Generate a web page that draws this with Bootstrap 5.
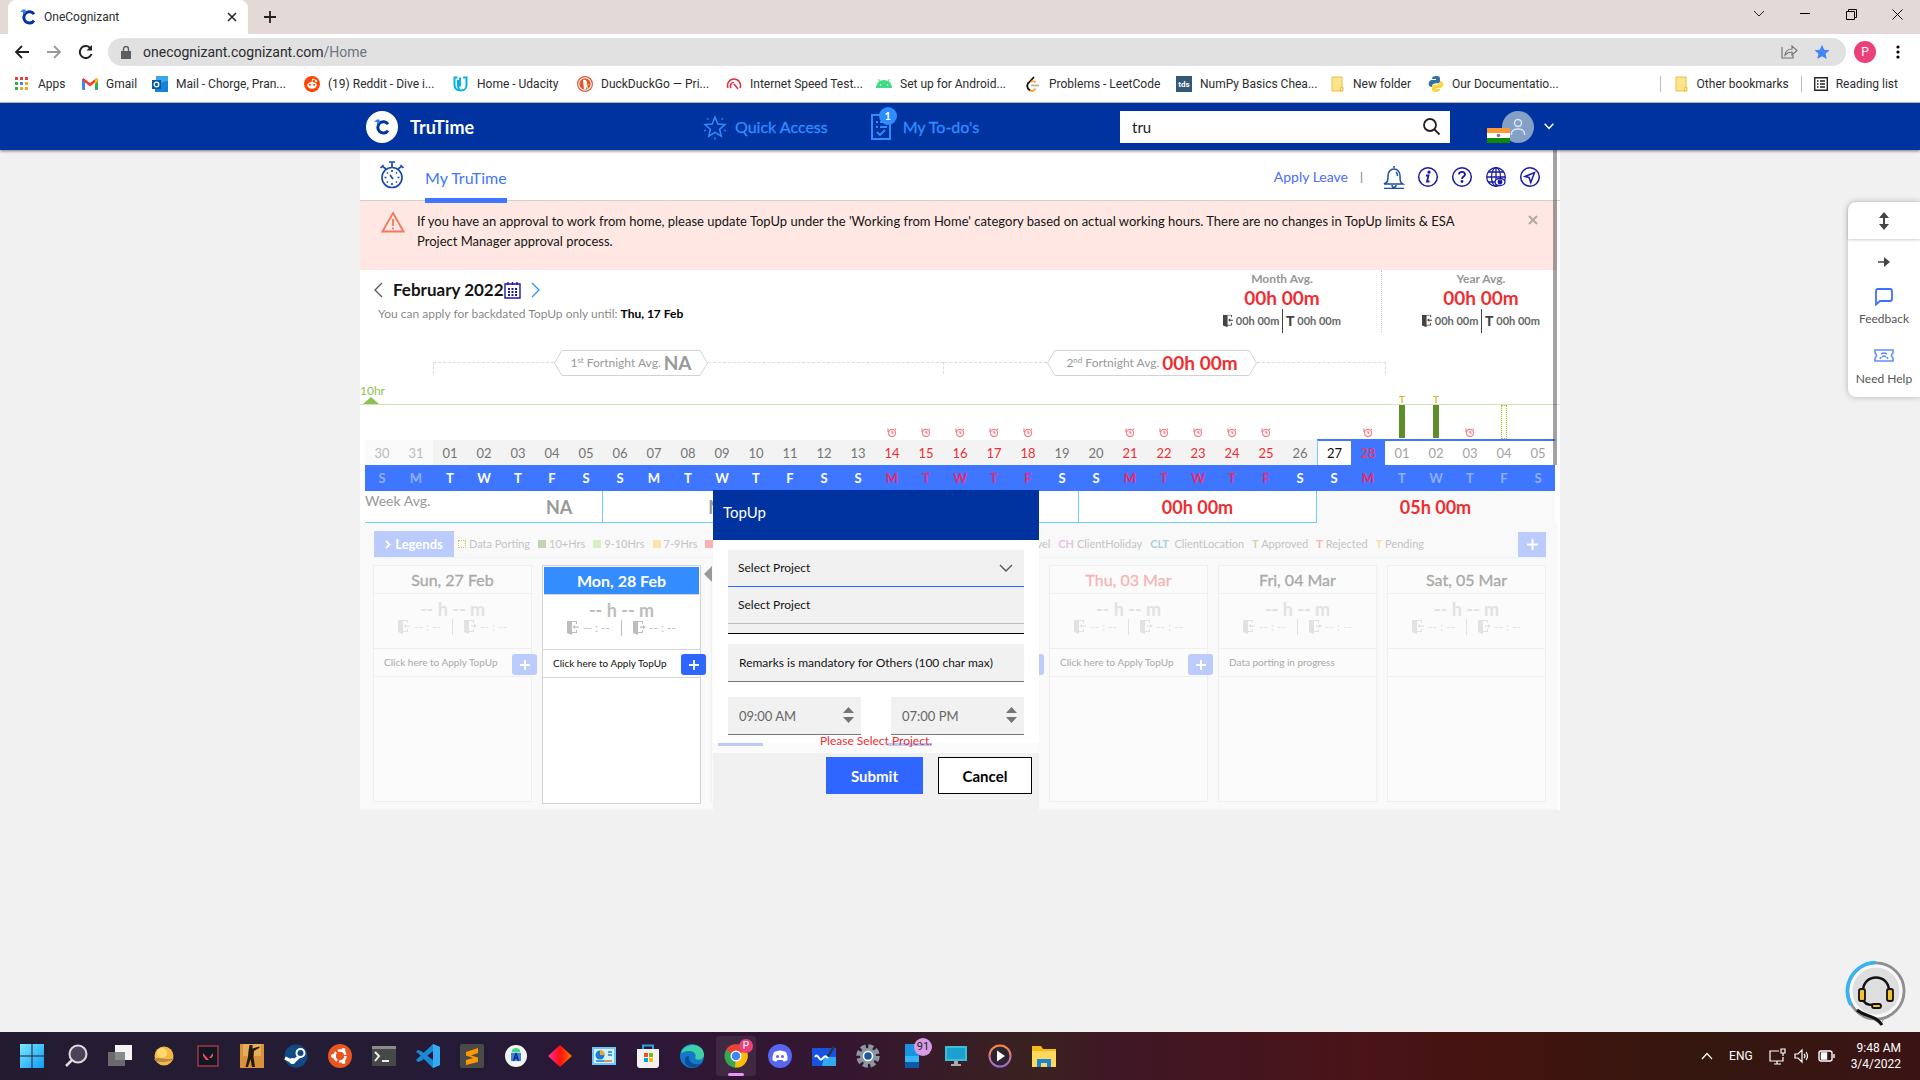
<!DOCTYPE html>
<html lang="en">
<head>
<meta charset="utf-8">
<meta name="viewport" content="width=device-width, initial-scale=1">
<title>OneCognizant</title>
<link href="https://cdn.jsdelivr.net/npm/bootstrap@5.3.0/dist/css/bootstrap.min.css" rel="stylesheet">
<script src="https://cdn.jsdelivr.net/npm/bootstrap@5.3.0/dist/js/bootstrap.bundle.min.js"></script>
<style>
:root{--navy:#0033a0;--blue:#3f76ff;--red:#ee2e32;--grey:#f1f1f1}
body{font-family:Lato,"Liberation Sans",sans-serif;font-size:12px;line-height:16px;color:#141414;background:var(--grey);min-height:100vh;overflow:hidden}
a{text-decoration:none;color:inherit}
svg{display:block;flex:none}
.plain-btn{border:0;background:none;padding:0;color:inherit}
/* browser chrome */
.chrome{font-family:Roboto,"Liberation Sans",sans-serif;color:#2b2c2e}
.tabstrip{height:34px;background:#e3dad7}
.browser-tab{width:240px;height:34px;margin-left:8px;padding:0 10px 0 12px;background:#fff;border-radius:8px 8px 0 0}
.win-ctl{width:46px;height:28px;display:flex;align-items:center;justify-content:center}
.toolbar-row{height:36px;background:#fff;padding:0 16px 0 14px}
.omnibox{height:28px;border-radius:14px;background:#e1e1e1;padding:0 16px 0 13px;margin-left:14px;font-size:14px}
.profile{width:22px;height:22px;line-height:22px;background:#ec407a;color:#fff;border-radius:50%;margin:0 16px 0 4px}
.bookmarks{height:33px;background:#fff;border-bottom:1px solid #c4c4c6;padding:0 22px 4px 14px}
.bookmark-grid{display:grid;grid-template-columns:68px 70px 152px 149px 124px 149px 150px 149px 151px 153px 99px auto}
.bookmark-grid a,.bookmark-right a{display:flex;align-items:center;gap:8px;white-space:nowrap}
.vbar{width:1px;height:16px;background:#bdbdbd}
/* app header */
.app-header{height:47px;background:var(--navy);position:relative;z-index:2;box-shadow:0 1px 3px rgba(0,0,0,.5)}
.shell{max-width:1200px;width:100%;margin-left:auto;margin-right:auto}
.brand{margin-left:6px}
.brand-name{font-size:18px;line-height:24px;font-weight:700;color:#fff}
.head-link{font-size:16px;line-height:24px;color:#2f8dff;-webkit-text-stroke:0.3px #2f8dff}
.todo-count{position:absolute;left:8px;top:-7px;width:18px;height:18px;border-radius:50%;background:#2f8dff;color:#fff;font-size:11px;line-height:18px;font-weight:700;text-align:center;-webkit-text-stroke:0}
.search-box{width:330px;height:32px;background:#fff;padding:0 9px 0 12px}
.search-box input{border:0;outline:0;flex:1;min-width:0;font-size:15px;padding:0;color:#222}
.flag{position:absolute;left:0;bottom:0}
/* panel */
.panel{position:relative;background:#fff}
.panel-scroll{position:absolute;right:3px;top:0;width:4px;height:315px;background:rgba(70,70,70,.5);z-index:1}
.tabs-row{height:51px;border-bottom:1px solid #cfcfcf;padding:0 19px 0 19px}
.main-tab{font-size:16px;line-height:24px;color:var(--blue);height:53px;padding-top:16px;border-bottom:5px solid var(--blue);position:relative;z-index:1;align-self:flex-start}
.apply-link{font-size:14px;line-height:20px;color:#4a6cff}
.notice{background:#ffe8e3;height:69px;margin-right:3px;padding:10px 19px 0 21px;font-size:13px;line-height:20px}
.month-row{height:86px;padding:0 20px 0 14px}
.month-name{font-size:17px;line-height:24px;font-weight:700}
.avg-box{width:118px;text-align:center;color:#969696;font-weight:700;padding-top:1px}
.avg-value{font-size:19px;line-height:22px;color:var(--red);font-weight:700}
.avg-split{font-size:11px;line-height:14px;color:#666}
.avg-split b{font-size:14px;color:#444}
.avg-sep{width:1px;height:62px;border-left:1px dotted #c9c9c9}
.split-bar{width:1px;height:24px;background:#444}
.fortnight{height:26px;margin:-6px 174px 0 73px}
.dash{height:12px;border-top:1px dashed #dcdcdc;margin-top:12px}
.fort-badge{position:relative;height:26px;color:#999;font-size:12px;display:flex;align-items:center;justify-content:center;align-self:flex-start;white-space:nowrap}
.fort-badge svg{position:absolute;inset:0;width:100%;height:100%}
.fort-badge sup{font-size:8px}
.fort-badge b{font-size:19px;line-height:22px;margin-left:3px;position:relative}
.goal{height:29px;border-bottom:1px solid #cde5b4;padding-top:9px;color:#8cc152;font-size:12px;line-height:12px}
.triangle{width:0;border:8px solid transparent;border-top:0;border-bottom:7px solid #8cc152;margin-left:3px}
.cal{width:1190px;table-layout:fixed;border-collapse:separate;border-spacing:0;margin-left:5px;text-align:center}
.cal td,.cal th{padding:0;font-weight:400}
.cal .marks td{height:34px;vertical-align:bottom;position:relative}
.cal .marks svg{margin:0 auto 1px}
.hours-bar{width:6px;height:34px;background:#5c8f2b;border-bottom:1px solid #fff;margin:0 auto}
.porting-bar{width:6px;height:34px;border:1px dotted #b5b800;margin:0 auto}
.t-mark{position:absolute;left:0;right:0;top:-11px;font-size:10px;line-height:10px;font-weight:700;color:#e3b62c}
.cal .dates td{height:26px;background:#f3f3f3;color:#757575;font-size:13px;line-height:22px;border-top:1px solid #fff}
.cal .dates .dim{background:#fafafa;color:#bcbcbc}
.cal .dates .now{background:#fff;border-top:2px solid var(--blue);color:#a3a3a3}
.cal .dates .absent{color:var(--red)}
.cal .dates .sel{background:var(--blue);border-top:2px solid var(--blue);color:#ff2d50}
.cal .dates .first-now{border-left:1px solid #6ecff6;color:#111}
.cal .names th{height:26px;background:var(--blue);color:#fff;font-size:13px;font-weight:700}
.cal .names th.dim{color:#8fb0ff}
.cal .names th.absent{color:#f0286a}
.cal .weeks td{height:32px;border-right:1px solid #6ecff6;border-bottom:1px solid #6ecff6;font-size:18px;font-weight:700;color:#999}
.cal .weeks td.zero{color:var(--red)}
.cal .weeks td.last-week{background:#f9f9f9;border-color:#f9f9f9}
.week-label{font-size:14px;font-weight:400;float:left;line-height:16px;margin-top:-6px}
/* lower area */
.lower{background:#f9f9f9;height:287px;padding:8px 12px 0 13px;margin-right:2px}
.legend-row{height:27px;border-bottom:1px solid #ebf5f7;color:#c4c4c4;font-size:11px;white-space:nowrap}
.legend-btn{width:80px;height:26px;background:#bacbfc;color:#fff;font-size:13px;font-weight:700;margin-left:1px}
.sw{width:8px;height:8px;display:inline-block;margin-right:3px}
.add-btn{width:28px;height:25px;background:#bacbfc;color:#fff;display:flex;align-items:center;justify-content:center;margin-left:94px}
.day-grid{display:grid;grid-template-columns:repeat(7,1fr);gap:10px;margin-top:7px}
.day-card{position:relative;height:237px;border:1px solid #efefef;background:#fbfbfb;color:#a9a9a9}
.day-card header{height:28px;border-bottom:1px solid #efefef;font-size:16px;line-height:27px;text-align:center;-webkit-text-stroke:0.3px currentColor}
.day-time{height:55px;border-bottom:1px solid #efefef;padding-top:5px;text-align:center;color:#e2e2e2}
.day-time b{display:block;font-size:18px;line-height:20px}
.day-topup{height:28px;border-bottom:1px solid #efefef;font-size:10px;line-height:26px;padding-left:10px;white-space:nowrap}
.plus-btn{position:absolute;right:-6px;top:88px;width:25px;height:21px;border-radius:3px;background:#bacbfc;display:flex;align-items:center;justify-content:center;z-index:1}
.day-card.chosen{height:239px;background:#fff;border-color:#d4d4d4;color:#111}
.chosen header{margin:1px 1px 0;background:#338dff;color:#fff;font-weight:700;border-color:#d4d4d4;-webkit-text-stroke:0}
.chosen .day-time{color:#bdbdbd;border-color:#d4d4d4}
.chosen .day-topup{border-color:#d4d4d4}
.chosen .plus-btn{background:#2f66ff}
.door-line{gap:3px}
/* top up dialog */
.topup{position:absolute;left:353px;top:340px;width:326px;z-index:3}
.topup-head{height:50px;background:var(--navy);color:#fff;font-size:15px;line-height:20px;padding:12px 10px}
.topup-body{background:#fff;height:203px;padding:10px 15px 0}
.topup-gap{height:10px;background:#fbfbfb;padding:0 5px}
.bar-hint{width:45px;height:3px;background:#bacbfc}
.topup-foot{background:var(--grey);height:57px;padding:4px 7px 0;gap:15px}
.field{border:0;border-bottom:1px solid #767676;border-radius:0;background:#f1f1f1;color:#141414;width:100%;font-size:12px;outline:0}
.field::placeholder{color:#141414;opacity:1}
.proj{height:37px;border-bottom:1px solid #2f66ff;padding:0 10px;appearance:none;background:#f1f1f1 url("data:image/svg+xml,%3Csvg xmlns='http://www.w3.org/2000/svg' width='14' height='8' fill='none' stroke='%23555' stroke-width='1.4'%3E%3Cpath d='M1 1l6 6 6-6'/%3E%3C/svg%3E") no-repeat right 11px center}
.option-row{height:37px;line-height:36px;background:#f1f1f1;border-bottom:1px solid #bdbdbd;padding:0 10px}
.option-end{height:10px;background:#f1f1f1;border-bottom:1px solid #000}
.remark{height:38px;margin-top:10px;padding:0 11px}
.time-row{margin-top:15px}
.time-wrap{position:relative;width:133px}
.time-field{height:38px;padding:0 11px;color:#666;font-size:13px}
.time-wrap svg{position:absolute;right:7px;top:10px}
.error-msg{position:absolute;left:0;right:0;top:243px;text-align:center;color:var(--red);z-index:1;font-size:12px}
.act{height:37px;border-radius:0;font-size:15px;line-height:20px;font-weight:700}
.submit{width:97px;background:#2f66ff;color:#fff;border:0}
.cancel{width:94px;background:#fff;border:1px solid #000;color:#000}
.topup-arrow{position:absolute;left:-9px;top:76px;width:0;border:8px solid transparent;border-right:8px solid #999;border-left:0}
/* floating tools */
.side-tools{position:absolute;right:0;top:202px;width:72px;background:#fff;border-radius:8px 0 0 8px;box-shadow:0 0 6px rgba(0,0,0,.25);font-size:12px;line-height:16px;color:#555;text-align:center;z-index:4;padding-bottom:10px}
.side-grip{height:37px;box-shadow:0 1px 3px rgba(0,0,0,.2);border-radius:8px 0 0 0}
.side-tools a{display:block;margin-top:21px}
.side-tools a + a{margin-top:22px}
.side-tools span{display:block;margin-top:5px}
.side-tools a + a span{margin-top:9px}
.side-arrow{padding-top:18px}
.chat-help{position:absolute;right:14px;bottom:53px}
/* taskbar */
.taskbar{position:absolute;left:0;right:0;bottom:0;height:48px;padding:0 19px 0 10px;color:#fff;font-family:Roboto,"Liberation Sans",sans-serif;background:linear-gradient(90deg,#231c31 0,#251b36 24%,#2c1737 33%,#35162f 44%,#3a2220 54%,#3f1726 58%,#4a1418 71%,#43130f 78%,#35170f 88%,#3a1414 100%)}
.slot{width:44px;height:48px;display:flex;align-items:center;justify-content:center;position:relative}
.active-app{height:40px;background:rgba(255,255,255,.08);border-radius:4px;width:40px;margin:0 2px}
.active-app::after{content:"";position:absolute;bottom:0;left:12px;width:16px;height:3px;border-radius:2px;background:#e59af0}
.pip{position:absolute;border-radius:50%;text-align:center}
.pip-p{right:3px;top:3px;width:14px;height:14px;background:#ec407a;font-size:10px;line-height:14px}
.pip-n{right:2px;top:6px;width:18px;height:18px;background:#d99be6;color:#222;font-size:11px;line-height:18px}
</style>
</head>
<body>
<svg width="0" height="0" class="position-absolute" aria-hidden="true">
  <symbol id="clogo" viewBox="0 0 16 16"><path d="M14 5.2A5.6 5.6 0 1 0 14 11.6" fill="none" stroke="#0033a0" stroke-width="3"/><path d="M0 2.4 3 .6h2.6V4L3 5.4V3z" fill="#2f7bff"/></symbol>
  <symbol id="door-in" viewBox="0 0 13 14"><path d="M0 0h5l0 14-5-2zM5 0h5v3H9V1H5zM5 11h4V9h1v3H5z" fill="currentColor"/><path d="M12 5.5H8V4L5.500 6 8 8V6.700h4z" fill="currentColor"/></symbol>
  <symbol id="door-out" viewBox="0 0 13 14"><path d="M0 0h5v14l-5-2zM5 0h5v3H9V1H5zM5 11h4V9h1v3H5z" fill="currentColor"/><path d="M7 5.500h3V4l3 2-3 2V6.700H7z" fill="currentColor"/></symbol>
  <symbol id="plus" viewBox="0 0 12 12"><path d="M6 1v10M1 6h10" stroke="#fff" stroke-width="1.800" fill="none"/></symbol>
  <symbol id="alarm" viewBox="0 0 10 11"><circle cx="5" cy="6" r="3.600" fill="#fff0f0" stroke="#f0868b" stroke-width="1.200"/><path d="M1 5V1.500M9 3l-1-1.500M5 4v2h1.500" stroke="#d8707d" fill="none"/></symbol>
  <symbol id="folder" viewBox="0 0 16 16"><path d="M3 1h10v14H3z" fill="#ffe48d" stroke="#e9bf45"/><path d="M11.500 11.500h2.500v3.500h-2.500z" fill="#ffe48d" stroke="#e9bf45"/></symbol>
</svg>

<div class="chrome">
  <div class="tabstrip d-flex align-items-end">
    <div class="browser-tab d-flex align-items-center">
      <svg width="16" height="16"><use href="#clogo"/></svg><span class="ms-2 flex-grow-1">OneCognizant</span>
      <button class="plain-btn" aria-label="Close tab"><svg width="12" height="12" viewBox="0 0 12 12" stroke="#222" stroke-width="1.500"><path d="M2 2l8 8M10 2l-8 8"/></svg></button>
    </div>
    <button class="plain-btn ms-3 mb-2" aria-label="New tab"><svg width="13" height="18" viewBox="0 0 13 18" stroke="#222" stroke-width="1.800"><path d="M6 3v12M0 9h12"/></svg></button>
    <div class="d-flex ms-auto align-self-start">
      <button class="plain-btn win-ctl" aria-label="Tab search"><svg width="12" height="8" viewBox="0 0 12 8" fill="none" stroke="#222"><path d="M1 1l5 5 5-5"/></svg></button>
      <button class="plain-btn win-ctl" aria-label="Minimize"><svg width="10" height="2"><rect width="10" height="1"/></svg></button>
      <button class="plain-btn win-ctl" aria-label="Restore"><svg width="11" height="11" viewBox="0 0 11 11" fill="none" stroke="#000"><path d="M.5 2.500h8v8h-8zM2.500 2.500v-2h8v8h-2"/></svg></button>
      <button class="plain-btn win-ctl" aria-label="Close"><svg width="11" height="11" viewBox="0 0 11 11" stroke="#000"><path d="M.5.5l10 10M10.500.5l-10 10"/></svg></button>
    </div>
  </div>
  <div class="toolbar-row d-flex align-items-center">
    <button class="plain-btn" aria-label="Back"><svg width="16" height="16" viewBox="0 0 16 16" fill="none" stroke="#222" stroke-width="1.800"><path d="M15 8H2M8 2L2 8l6 6"/></svg></button>
    <button class="plain-btn ms-3" aria-label="Forward"><svg width="16" height="16" viewBox="0 0 16 16" fill="none" stroke="#9a9a9a" stroke-width="1.800"><path d="M1 8h13M8 2l6 6-6 6"/></svg></button>
    <button class="plain-btn ms-3" aria-label="Reload"><svg width="16" height="16" viewBox="0 0 16 16" fill="none" stroke="#222" stroke-width="2"><path d="M13.500 10A6 6 0 1 1 12 3.700"/><path d="M14 1v5.500H8.500z" fill="#222" stroke="none"/></svg></button>
    <div class="omnibox d-flex align-items-center flex-grow-1">
      <svg width="10" height="13" viewBox="0 0 10 13"><path d="M0 5h10v8H0z" fill="#5c5e62"/><path d="M2.500 5V3a2.500 2.500 0 0 1 5 0v2" fill="none" stroke="#5c5e62" stroke-width="1.400"/></svg>
      <a href="#" class="ms-2 ps-1">onecognizant.cognizant.com<span class="text-secondary">/Home</span></a>
      <svg class="ms-auto" width="17" height="16" viewBox="0 0 17 16" fill="none" stroke="#777" stroke-width="1.200"><path d="M1 3v11h11v-3"/><path d="M4 11c.5-4 3-6 7-6V2l5 4.500-5 4.500V8c-3 0-5 1-7 3z"/></svg>
      <svg class="ms-3" width="16" height="16" viewBox="0 0 16 16"><path d="M8 .8l2.200 4.900 5.300.5-4 3.500 1.200 5.200L8 12.200 3.300 14.900l1.200-5.200-4-3.500 5.300-.5z" fill="#4285f4"/></svg>
    </div>
    <button class="plain-btn profile ms-2">P</button>
    <button class="plain-btn px-1" aria-label="Menu"><svg width="4" height="14"><circle cx="2" cy="2" r="1.600"/><circle cx="2" cy="7" r="1.600"/><circle cx="2" cy="12" r="1.600"/></svg></button>
  </div>
  <div class="bookmarks d-flex align-items-center justify-content-between">
    <nav class="bookmark-grid">
      <a href="#"><svg width="16" height="16" viewBox="0 0 16 16"><g fill="#ea4335"><path d="M1 1h3v3H1zM6 1h3v3H6zM11 1h3v3h-3z"/></g><path d="M1 6h3v3H1z" fill="#34a853"/><path d="M6 6h3v3H6z" fill="#4285f4"/><path d="M11 6h3v3h-3zM6 11h3v3H6zM11 11h3v3h-3z" fill="#f5a623"/><path d="M1 11h3v3H1z" fill="#34a853"/></svg>Apps</a>
      <a href="#"><svg width="16" height="16" viewBox="0 0 16 16"><path d="M0 3h3v11H1.200Q0 14 0 13z" fill="#4285f4"/><path d="M13 3h3v10q0 1-1.200 1H13z" fill="#34a853"/><path d="M0 4l1.500-2L8 7l6.500-5L16 4l-8 6.500z" fill="#ea4335"/><path d="M13 3l2-1 1 1.500v2L13 8z" fill="#fbbc04"/></svg>Gmail</a>
      <a href="#"><svg width="16" height="16" viewBox="0 0 16 16"><path d="M4 0h12v7H4z" fill="#35a9ea"/><path d="M3 8l13-3v11H3z" fill="#1783d8"/><path d="M0 4h9v9H0z" fill="#0a58a8"/><circle cx="4.500" cy="8.500" r="2.300" fill="none" stroke="#fff" stroke-width="1.300"/></svg>Mail - Chorge, Pran...</a>
      <a href="#"><svg width="16" height="16" viewBox="0 0 16 16"><circle cx="8" cy="8" r="8" fill="#ff4500"/><ellipse cx="8" cy="9.300" rx="4.800" ry="3.400" fill="#fff"/><circle cx="12" cy="5" r="1.200" fill="#fff"/><circle cx="6" cy="8.700" r="1" fill="#ff4500"/><circle cx="10" cy="8.700" r="1" fill="#ff4500"/><path d="M8 6l.7-3 3 1M6 11q2 1.200 4 0" stroke="#fff" fill="none"/></svg>(19) Reddit - Dive i...</a>
      <a href="#"><svg width="16" height="16" viewBox="0 0 16 16" fill="none" stroke="#02b3e4" stroke-width="2"><path d="M4.500 1.500H1.500V9c0 4 3 5.500 5.500 5M7 1.500v9"/><path d="M10 1.500h3.500V9c0 3-2 5.500-5 5.500S5 12 5 9V4"/></svg>Home - Udacity</a>
      <a href="#"><svg width="16" height="16" viewBox="0 0 16 16"><circle cx="8" cy="8" r="7.400" fill="#fff" stroke="#de5833" stroke-width="1.200"/><circle cx="8" cy="8" r="5.700" fill="#de5833"/><path d="M6 4c3-1 4 1 4 4l1 5c-2 1-4 0-4 0z" fill="#fff"/><path d="M9 8h4l-3 1.500z" fill="#fbbc04"/><path d="M9 11l2 2-2 .5z" fill="#34a853"/></svg>DuckDuckGo — Pri...</a>
      <a href="#"><svg width="16" height="16" viewBox="0 0 16 16" fill="none" stroke="#dc3545" stroke-width="1.600"><path d="M2 12A6.500 6.500 0 1 1 14 12M5 12a3.500 3.500 0 0 1 3-5.500M8 8l4 5" /></svg>Internet Speed Test...</a>
      <a href="#"><svg width="16" height="16" viewBox="0 0 16 16"><path d="M0 12a8 8 0 0 1 16 0z" fill="#3ddc84"/><path d="M4 6L2.500 3M12 6l1.500-3" stroke="#3ddc84"/><circle cx="4.500" cy="9" r=".8" fill="#fff"/><circle cx="11.500" cy="9" r=".8" fill="#fff"/></svg>Set up for Android...</a>
      <a href="#"><svg width="16" height="16" viewBox="0 0 16 16" fill="none" stroke-width="1.800"><path d="M9 1L3.500 7" stroke="#111"/><path d="M3.500 6.500C1 10 3 13 5 14.500" stroke="#111"/><path d="M5 14.500c2 1.500 4 0 5.500-2M6 6c2-2 3-1 4.500.5" stroke="#ffa116"/><path d="M6 9.500h8" stroke="#b3b3b3"/></svg>Problems - LeetCode</a>
      <a href="#"><svg width="16" height="16" viewBox="0 0 16 16"><path d="M0 0h16v16H0z" fill="#355876"/><text x="8" y="11" font-size="8" font-weight="700" fill="#fff" text-anchor="middle">tds</text></svg>NumPy Basics Chea...</a>
      <a href="#"><svg width="16" height="16"><use href="#folder"/></svg>New folder</a>
      <a href="#"><svg width="16" height="16" viewBox="0 0 16 16"><path d="M8 0c4 0 4 1 4 4.500C12 8 10 7 7 7.500 4 8 4 10 4 11c-5 0-4-7 0-7h4V3H4c0-2 1-3 4-3z" fill="#3571a3"/><path d="M8 16c-4 0-4-1-4-4.500C4 8 6 9 9 8.500c3-.5 3-2.500 3-3.500 5 0 4 7 0 7H8v1h4c0 2-1 3-4 3z" fill="#ffd53e"/></svg>Our Documentatio...</a>
    </nav>
    <div class="bookmark-right d-flex align-items-center">
      <span class="vbar me-2"></span><a href="#" class="ms-1 me-2"><svg width="16" height="16"><use href="#folder"/></svg>Other bookmarks</a>
      <span class="vbar me-2 ms-1"></span><a href="#" class="ps-1"><svg width="14" height="14" viewBox="0 0 14 14" fill="none" stroke="#222" stroke-width="1.400"><path d="M.7.7h12.600v12.600H.7zM3 4h1.500M6 4h5M3 7h1.500M6 7h5M3 10h1.500M6 10h5"/></svg>Reading list</a>
    </div>
  </div>
</div>

<header class="app-header">
  <div class="shell d-flex align-items-center h-100 position-relative">
    <a href="#" class="brand d-flex align-items-center"><svg width="32" height="32" viewBox="0 0 32 32"><circle cx="16" cy="16" r="16" fill="#fff"/><use href="#clogo" x="8" y="8" width="16" height="16"/></svg><span class="brand-name ms-2 ps-1">TruTime</span></a>
    <div class="position-absolute start-0 end-0 d-flex align-items-center" style="padding-left:343px">
      <a href="#" class="head-link d-flex align-items-center"><svg width="24" height="26" viewBox="0 0 24 26" fill="none" stroke="#2f8dff" stroke-width="1.500"><path d="M12 3l2.800 7 7.200.6-5.400 4.600 1.600 7L12 18.400l-6.200 3.800 1.600-7L2 10.600 9.200 10z"/><path d="M4 4l1.500 2M20 4l-1.500 2M1 17l2-1M23 17l-2-1M12 23v3" stroke-width="1.100"/></svg><span class="ms-1 ps-1">Quick Access</span></a>
      <a href="#" class="head-link d-flex align-items-center position-relative" style="margin-left:43px"><svg width="20" height="26" viewBox="0 0 20 26" fill="none" stroke="#2f8dff" stroke-width="2"><path d="M1 1h18v24H1z"/><path d="M5 8h2M9 8h7M5 13h2M9 13h7M6 18l3 3 5-5" stroke-width="1.800"/></svg><span class="todo-count">1</span><span class="ms-2 ps-1">My To-do's</span></a>
      <label class="search-box d-flex align-items-center ms-auto"><span class="visually-hidden">Search</span><input type="text" value="tru"><svg width="18" height="18" viewBox="0 0 18 18" fill="none" stroke="#222" stroke-width="1.800"><circle cx="7" cy="7" r="6"/><path d="M11.500 11.500l5 5"/></svg></label>
      <div class="position-relative" style="width:47px;height:32px;margin-left:37px"><svg class="ms-auto" width="32" height="32" viewBox="0 0 32 32"><circle cx="16" cy="16" r="16" fill="#85a0c6"/><g fill="none" stroke="#dbe7f5" stroke-width="1.400"><circle cx="16" cy="12" r="3.500"/><path d="M9.500 24v-1.500c0-6 13-6 13 0V24"/></g></svg>
      <svg class="flag" width="23" height="15" viewBox="0 0 23 15"><path d="M0 0h23v5H0z" fill="#ff9933"/><path d="M0 5h23v5H0z" fill="#fff"/><path d="M0 10h23v5H0z" fill="#138808"/><circle cx="11.500" cy="7.500" r="1.800" fill="#7775b8"/></svg></div>
      <button class="plain-btn" style="margin:0 6px 0 10px" aria-label="Account menu"><svg width="10" height="7" viewBox="0 0 10 7" fill="none" stroke="#fff" stroke-width="1.500"><path d="M.7.8L5 5.500 9.300.8"/></svg></button>
    </div>
  </div>
</header>

<main class="shell panel">
  <div class="panel-scroll"></div>
  <div class="tabs-row d-flex align-items-center">
    <svg width="26" height="28" viewBox="0 0 26 28" fill="none" stroke="#1d4ea8" stroke-width="1.700"><circle cx="13" cy="16.500" r="10"/><path d="M10 1h6M13 1v5M3 5l4 3M23 5l-4 3M1.500 7l3-3M24.500 7l-3-3"/><path d="M13 9v2M13 22v2M5.500 16.500h2M18.500 16.500h2M8 11.500l1 1M18 11.500l-1 1M8 21.500l1-1M18 21.500l-1-1M11 14l3 4"/></svg>
    <a href="#" class="main-tab" style="margin-left:20px">My TruTime</a>
    <a href="#" class="apply-link ms-auto mt-1">Apply Leave</a><span class="ms-2 ps-1 mt-1 text-secondary">|</span>
    <div class="d-flex align-items-center gap-2 ms-3 ps-1 mt-1">
      <a href="#" aria-label="Alerts" class="me-1"><svg width="22" height="24" viewBox="0 0 22 24" fill="none" stroke="#1d4ea8" stroke-width="1.500"><path d="M11 1v2M1 19h19c-3-2-3-3-3-8 0-4-2.500-7-6-7s-6 3-6 7c0 5 0 6-4 8zM9 20c0 3 4 3 4 0M13 7c1 1 1.500 2 1.500 4M1 23.500h20"/></svg></a>
      <a href="#" aria-label="Information" class="me-1"><svg width="22" height="22" viewBox="0 0 22 22" fill="none" stroke="#1a1aa6" stroke-width="1.500"><circle cx="11" cy="11" r="9.300"/><path d="M9 9.500h2.500L10 15.500h2.500" stroke-width="1.800"/><circle cx="12" cy="6.200" r=".9" fill="#1a1aa6"/></svg></a>
      <a href="#" aria-label="Help" class="me-1"><svg width="22" height="22" viewBox="0 0 22 22" fill="none" stroke="#1a1aa6" stroke-width="1.500"><circle cx="11" cy="11" r="9.300"/><path d="M8 8.500C8 5 14 5 14 8.500c0 2-3 2.200-3 4.500" stroke-width="1.800"/><circle cx="11" cy="15.500" r=".7" fill="#1a1aa6"/></svg></a>
      <a href="#" aria-label="Language" class="me-1"><svg width="22" height="22" viewBox="0 0 22 22" fill="none" stroke="#1a1aa6" stroke-width="1.300"><circle cx="11" cy="11" r="9.300"/><ellipse cx="11" cy="11" rx="4.500" ry="9.300"/><path d="M11 2v18M2 11h18M3.500 6h15M3.500 16h15"/><ellipse cx="15" cy="16" rx="5" ry="3.500" fill="#fff"/><circle cx="15" cy="16" r="1.800" fill="#1a1aa6"/></svg></a>
      <a href="#" aria-label="Navigate"><svg width="22" height="22" viewBox="0 0 22 22" fill="none" stroke="#1a1aa6" stroke-width="1.500"><circle cx="11" cy="11" r="9.300"/><path d="M15.500 6.500l-3.700 10-1.800-5-4-1z"/></svg></a>
    </div>
  </div>

  <div class="notice d-flex">
    <svg width="24" height="22" viewBox="0 0 24 22" fill="none" stroke="#f4795b" stroke-width="1.800"><path d="M12 2l10.500 18.500h-21z"/><path d="M12 8v7M12 16.500v2"/></svg>
    <p class="mb-0 ms-2 ps-1 flex-grow-1 pe-5">If you have an approval to work from home, please update TopUp under the 'Working from Home' category based on actual working hours. There are no changes in TopUp limits &amp; ESA Project Manager approval process.</p>
    <button class="plain-btn align-self-start mt-1" aria-label="Dismiss"><svg width="10" height="10" viewBox="0 0 10 10" stroke="#b3a8a6" stroke-width="2.200"><path d="M1 1l8 8M9 1L1 9"/></svg></button>
  </div>

  <section class="month-row d-flex">
    <div class="pt-2">
      <div class="d-flex align-items-center">
        <button class="plain-btn" aria-label="Previous month"><svg width="9" height="16" viewBox="0 0 9 16" fill="none" stroke="#555" stroke-width="1.300"><path d="M8 1L1 8l7 7"/></svg></button>
        <span class="month-name" style="margin-left:10px">February 2022</span>
        <button class="plain-btn" aria-label="Pick date"><svg width="17" height="18" viewBox="0 0 17 18" fill="none" stroke="#1a1aa6" stroke-width="1.400"><path d="M1 3h15v14H1zM4 1v3M8.500 1v3M13 1v3"/><path d="M4 8h9M4 11h9M4 14h9" stroke-dasharray="2 1.500" stroke-width="2"/></svg></button>
        <button class="plain-btn" style="margin-left:10px" aria-label="Next month"><svg width="9" height="16" viewBox="0 0 9 16" fill="none" stroke="#2f8dff" stroke-width="1.300"><path d="M1 1l7 7-7 7"/></svg></button>
      </div>
      <div class="ms-1 mt-1 text-black-50">You can apply for backdated TopUp only until: <b class="text-black">Thu, 17 Feb</b></div>
    </div>
    <div class="avg-box ms-auto">Month Avg.
      <div class="avg-value">00h 00m</div>
      <div class="avg-split d-flex align-items-center justify-content-between"><svg width="10" height="14" viewBox="0 0 11 14" color="#444"><use href="#door-in" width="13" height="14"/></svg>00h 00m<span class="split-bar"></span><b>T</b>00h 00m</div>
    </div>
    <div class="avg-sep" style="margin:0 40px"></div>
    <div class="avg-box">Year Avg.
      <div class="avg-value">00h 00m</div>
      <div class="avg-split d-flex align-items-center justify-content-between"><svg width="10" height="14" viewBox="0 0 11 14" color="#444"><use href="#door-in" width="13" height="14"/></svg>00h 00m<span class="split-bar"></span><b>T</b>00h 00m</div>
    </div>
  </section>

  <section class="fortnight d-flex">
    <div class="dash flex-grow-1" style="border-left:1px dashed #dcdcdc"></div>
    <div class="fort-badge" style="width:154px"><svg viewBox="0 0 154 26" preserveAspectRatio="none" fill="#fff" stroke="#d2d2d2"><path d="M8 .5h138l7.500 12.500-7.500 12.500H8L.5 13z"/></svg><span class="position-relative">1<sup>st</sup> Fortnight Avg.</span><b>NA</b></div>
    <div class="dash" style="width:236px;border-right:1px dashed #dcdcdc"></div>
    <div class="dash" style="width:103px"></div>
    <div class="fort-badge" style="width:210px"><svg viewBox="0 0 210 26" preserveAspectRatio="none" fill="#fff" stroke="#d2d2d2"><path d="M8 .5h194l7.500 12.500-7.500 12.500H8L.5 13z"/></svg><span class="position-relative">2<sup>nd</sup> Fortnight Avg.</span><b style="color:var(--red)">00h 00m</b></div>
    <div class="dash" style="width:129px;border-right:1px dashed #dcdcdc"></div>
  </section>

  <div class="goal">10hr<div class="triangle"></div></div>
  <table class="cal">
    <tbody id="calBody"></tbody>
  </table>

  <section class="lower">
    <div class="legend-row d-flex align-items-center">
      <button class="plain-btn legend-btn d-flex align-items-center justify-content-center"><svg class="me-1" width="6" height="9" viewBox="0 0 6 9" fill="none" stroke="#fff" stroke-width="1.800"><path d="M1 1l3.500 3.500L1 8"/></svg>Legends</button>
      <span class="ms-1"><i class="sw" style="border:1px dotted #c9cc4a"></i>Data Porting</span>
      <span class="ms-2"><i class="sw" style="background:#c3d4b4"></i>10+Hrs</span>
      <span class="ms-2"><i class="sw" style="background:#d9edc3"></i>9-10Hrs</span>
      <span class="ms-2"><i class="sw" style="background:#fbe5ae"></i>7-9Hrs</span>
      <span class="ms-2"><i class="sw" style="background:#f8b0b3"></i></span>
      <span class="ms-auto">Travel</span>
      <span class="ms-2"><b style="color:#e8c3e2">CH</b> ClientHoliday</span>
      <span class="ms-2"><b style="color:#a5d2da">CLT</b>&nbsp; ClientLocation</span>
      <span class="ms-2"><b style="color:#c5dcae">T</b> Approved</span>
      <span class="ms-2"><b style="color:#f8b0b3">T</b> Rejected</span>
      <span class="ms-2"><b style="color:#f4dfaa">T</b> Pending</span>
      <button class="plain-btn add-btn" aria-label="Add"><svg width="13" height="13"><use href="#plus"/></svg></button>
    </div>
    <div class="day-grid" id="dayGrid"></div>
  </section>

  <form class="topup" onsubmit="return false">
    <div class="topup-arrow"></div>
    <div class="topup-head">TopUp</div>
    <div class="topup-body">
      <label class="visually-hidden" for="proj">Project</label>
      <select id="proj" class="field proj d-block"><option>Select Project</option></select>
      <div class="option-row">Select Project</div>
      <div class="option-end"></div>
      <label class="visually-hidden" for="remark">Remarks</label>
      <input id="remark" class="field remark d-block" placeholder="Remarks is mandatory for Others (100 char max)">
      <div class="time-row d-flex justify-content-between">
        <div class="time-wrap"><label class="visually-hidden" for="from">From</label><input id="from" class="field time-field d-block" value="09:00 AM"><svg width="11" height="16" viewBox="0 0 11 16" fill="#757575"><path d="M0 6l5.500-6L11 6zM0 10h11l-5.500 6z"/></svg></div>
        <div class="time-wrap"><label class="visually-hidden" for="to">To</label><input id="to" class="field time-field d-block" value="07:00 PM"><svg width="11" height="16" viewBox="0 0 11 16" fill="#757575"><path d="M0 6l5.500-6L11 6zM0 10h11l-5.500 6z"/></svg></div>
      </div>
    </div>
    <div class="error-msg">Please Select Project.</div>
    <div class="topup-gap d-flex"><div class="bar-hint"></div><div class="bar-hint" style="margin-left:124px"></div></div>
    <div class="topup-foot d-flex justify-content-end">
      <button class="act submit">Submit</button><button class="act cancel">Cancel</button>
    </div>
  </form>
</main>

<aside class="side-tools">
  <div class="side-grip d-flex align-items-center justify-content-center"><svg width="10" height="18" viewBox="0 0 10 18" fill="#444"><path d="M5 0l5 6H6v6h4l-5 6-5-6h4V6H0z"/></svg></div>
  <div class="side-arrow d-flex justify-content-center"><svg width="12" height="10" viewBox="0 0 12 10" fill="#444"><path d="M0 4.200h6V0l6 5-6 5V5.800H0z"/></svg></div>
  <a href="#"><svg class="mx-auto" width="18" height="18" viewBox="0 0 18 18" fill="none" stroke="#3f6fff" stroke-width="1.800"><path d="M1 16.500V3q0-2 2-2h12q2 0 2 2v8q0 2-2 2H5z"/></svg><span>Feedback</span></a>
  <a href="#"><svg class="mx-auto" width="20" height="13" viewBox="0 0 20 13" fill="none" stroke="#5f8cff" stroke-width="1.600"><path d="M1 1h18v3q-3 2.500 0 5v3H1V9q3-2.500 0-5zM7 5q3-2 6 0M8 8q2-2 4 0M6 10l1-2M14 10l-1-2"/></svg><span>Need Help</span></a>
</aside>

<button class="plain-btn chat-help" aria-label="Chat support"><svg width="61" height="66" viewBox="0 0 61 66"><path d="M36 64L22 54h18z" fill="#ddd" stroke="#aaa"/><circle cx="31" cy="30" r="28" fill="#e2e2e2" stroke="#8f8f8f" stroke-width="3"/><path d="M6 44A28.500 28.500 0 0 1 31 1.500" fill="none" stroke="#35b5f5" stroke-width="3.500"/><circle cx="31" cy="30" r="25" fill="#dedede" stroke="#f8f8f8" stroke-width="3"/><path d="M12 49c8 7 19 5 25 15" fill="none" stroke="#111" stroke-width="3"/><g fill="none" stroke="#111" stroke-width="2.500"><path d="M18 30c0-18 26-18 26 0M18 38c1 5 6 6 10 6"/></g><g fill="#f2c230" stroke="#111" stroke-width="1.800"><rect x="14" y="28" width="6" height="12" rx="2"/><rect x="42" y="28" width="6" height="12" rx="2"/><rect x="27" y="43" width="9" height="4" rx="2"/></g></svg></button>

<footer class="taskbar d-flex align-items-center">
  <div class="slot"><svg width="24" height="24" viewBox="0 0 24 24"><defs><linearGradient id="wg" x2="1" y2="1"><stop stop-color="#7ce8ff"/><stop offset="1" stop-color="#0f9bf5"/></linearGradient></defs><path d="M0 0h11.500v11.500H0zM12.500 0H24v11.500H12.500zM0 12.500h11.500V24H0zM12.500 12.500H24V24H12.500z" fill="url(#wg)"/></svg></div>
  <div class="slot"><svg width="24" height="24" viewBox="0 0 24 24"><circle cx="14" cy="10" r="8.500" fill="#4b4458" stroke="#ddd" stroke-width="2"/><path d="M8 16l-6 6" stroke="#ddd" stroke-width="2.500"/></svg></div>
  <div class="slot"><svg width="24" height="24" viewBox="0 0 24 24"><path d="M7 1h17v15H7z" fill="#f4f4f4"/><path d="M0 8h17v14H0z" fill="#777" opacity=".85"/></svg></div>
  <div class="slot"><svg width="22" height="22" viewBox="0 0 22 22"><circle cx="11" cy="11" r="9.500" fill="#f5b942"/><circle cx="9" cy="8" r="5" fill="#ffd96e"/><path d="M1 14c6-3 11 2 20-1-1 4-18 6-20 1z" fill="#b98747"/></svg></div>
  <div class="slot"><svg width="22" height="22" viewBox="0 0 22 22"><path d="M1 1h20v20H1z" fill="#101823" stroke="#a33244" stroke-width="1.500"/><path d="M6 8l6 7H9l-3-4zM16 8v3l-1.500 2h-2.500z" fill="#ff4655"/></svg></div>
  <div class="slot"><svg width="24" height="24" viewBox="0 0 24 24"><path d="M0 0h24v24H0z" fill="#d9923b"/><path d="M3 0h18v12H3z" fill="#f1c06a" opacity=".6"/><path d="M9.500 1h3v3.500l7-2v1.200L14 7l-.5 6L15 23h-3l-1.500-8L8 23H5.500L8 13l.5-6z" fill="#251a12"/></svg></div>
  <div class="slot"><svg width="24" height="24" viewBox="0 0 24 24"><circle cx="12" cy="12" r="11.500" fill="#124a84"/><path d="M1 14l8 4 9-8" stroke="#fff" stroke-width="3.500" fill="none"/><circle cx="16.500" cy="9" r="4" fill="#124a84" stroke="#fff" stroke-width="2"/><circle cx="8.500" cy="17" r="3" fill="#fff"/></svg></div>
  <div class="slot"><svg width="24" height="24" viewBox="0 0 24 24"><circle cx="12" cy="12" r="12" fill="#e95420"/><circle cx="12" cy="12" r="5.500" fill="none" stroke="#fff" stroke-width="2.500" stroke-dasharray="9.500 2"/><circle cx="5" cy="12" r="2" fill="#fff"/><circle cx="15.500" cy="6" r="2" fill="#fff"/><circle cx="15.500" cy="18" r="2" fill="#fff"/></svg></div>
  <div class="slot"><svg width="24" height="20" viewBox="0 0 24 20"><rect width="24" height="20" rx="1" fill="#484848"/><path d="M0 0h24v3H0z" fill="#8a8a8a"/><path d="M3 6l4 4-4 5M10 15h7" stroke="#eee" stroke-width="2" fill="none"/></svg></div>
  <div class="slot"><svg width="24" height="24" viewBox="0 0 24 24"><path d="M17 0l7 3v18l-7 3L2 9l-2-1 2-2 3 1 12 9V7L5 17l-3 1-2-2z" fill="#1b8ad6"/><path d="M17 0l7 3v18l-7 3z" fill="#35a9f1"/></svg></div>
  <div class="slot"><svg width="24" height="24" viewBox="0 0 24 24"><rect width="24" height="24" rx="2" fill="#4a4a4a"/><path d="M18 4v5l-7 2.500 7 2V18L6 21v-5l7-2-7-2.500V8z" fill="#ff9800"/></svg></div>
  <div class="slot"><svg width="22" height="22" viewBox="0 0 22 22"><circle cx="11" cy="11" r="11" fill="#f4f4f4"/><path d="M6 8h10v8H6z" fill="#3b82f0"/><path d="M6.500 7.500a4.500 4.500 0 0 1 9 0z" fill="#3ddc84"/><path d="M11 8l-2.500 8M11 8l2.500 8M9 13h4" stroke="#0b2a6b" stroke-width="1.300"/></svg></div>
  <div class="slot"><svg width="24" height="22" viewBox="0 0 24 22"><defs><linearGradient id="rd"><stop stop-color="#ff2fa0"/><stop offset=".5" stop-color="#ff1010"/><stop offset="1" stop-color="#ff7a00"/></linearGradient></defs><path d="M12 0l12 11-12 11L0 11z" fill="url(#rd)"/></svg></div>
  <div class="slot"><svg width="24" height="18" viewBox="0 0 24 18"><path d="M0 0h24v18H0z" fill="#6bc7f5"/><path d="M2 2h20v14H2z" fill="#d3f0ff"/><circle cx="8" cy="8" r="4.500" fill="#1c7ed0"/><path d="M8 8V3a5 5 0 0 1 5 5z" fill="#f5a534"/><path d="M16 5h4M16 8h4M4 14h8" stroke="#1c7ed0" stroke-width="1.600"/><path d="M12 14h8" stroke="#e07d2e" stroke-width="1.600"/></svg></div>
  <div class="slot"><svg width="24" height="24" viewBox="0 0 24 24"><path d="M7 6V1.500h10V6" fill="none" stroke="#2aa4e0" stroke-width="2"/><path d="M1 5h22v16q0 3-3 3H4q-3 0-3-3z" fill="#f2f2f2"/><path d="M8 9h4v4H8z" fill="#f25022"/><path d="M13 9h4v4h-4z" fill="#7fba00"/><path d="M8 14h4v4H8z" fill="#00a4ef"/><path d="M13 14h4v4h-4z" fill="#ffb900"/></svg></div>
  <div class="slot"><svg width="24" height="24" viewBox="0 0 24 24"><circle cx="12" cy="12" r="12" fill="#1479c9"/><path d="M1 9C4-2 24-2 24 11c0 5-7 6-9 3 3-5-4-10-14-5z" fill="#3fd0a8"/><path d="M9 12c-1 5 4 11 13 7-6 7-15 5-17-1-1-4 1-6 4-6z" fill="#0b4f9c"/></svg></div>
  <div class="slot active-app"><svg width="24" height="24" viewBox="0 0 24 24"><circle cx="12" cy="12" r="11.500" fill="#34a853"/><path d="M12 12L2 6a11.500 11.500 0 0 1 20 0z" fill="#ea4335"/><path d="M12 12l10-6a11.500 11.500 0 0 1-11 17.500z" fill="#fbbc04"/><circle cx="12" cy="12" r="5.500" fill="#fff"/><circle cx="12" cy="12" r="4.300" fill="#4285f4"/></svg><span class="pip pip-p">P</span></div>
  <div class="slot"><svg width="24" height="24" viewBox="0 0 24 24"><circle cx="12" cy="12" r="12" fill="#5865f2"/><path d="M6 8q6-3 12 0 2 4 1.500 8-3 2-4 1.500l-1-1.500H9.500l-1 1.500Q7 18 4.500 16 4 12 6 8z" fill="#fff"/><circle cx="9.500" cy="12.500" r="1.500" fill="#5865f2"/><circle cx="14.500" cy="12.500" r="1.500" fill="#5865f2"/></svg></div>
  <div class="slot"><svg width="24" height="22" viewBox="0 0 24 22"><path d="M0 3h24v18H0z" fill="#1553e0"/><path d="M12 12h12v9H10z" fill="#31a8f0"/><path d="M3 12c3-5 4 5 7 2s3-4 6-1" stroke="#fff" stroke-width="2" fill="none"/><path d="M15 11l6-10 2 1-6 10z" fill="#333"/></svg></div>
  <div class="slot"><svg width="24" height="24" viewBox="0 0 24 24"><circle cx="12" cy="12" r="9.500" fill="none" stroke="#8b97a2" stroke-width="4.500" stroke-dasharray="5 2.460"/><circle cx="12" cy="12" r="8" fill="#8b97a2"/><circle cx="12" cy="12" r="4.500" fill="#1d5a97" stroke="#fff" stroke-width="1.500"/></svg></div>
  <div class="slot"><svg width="14" height="24" viewBox="0 0 14 24"><path d="M0 0h14v24H0z" fill="#1c93e0"/><path d="M0 12h14v6H0z" fill="#36b5f5"/><path d="M0 18h14v6H0z" fill="#0b5ba8"/></svg><span class="pip pip-n">91</span></div>
  <div class="slot"><svg width="22" height="20" viewBox="0 0 22 20"><path d="M0 0h22v15H0z" fill="#3cbfd6"/><path d="M2 2h18v11H2z" fill="#1d9fd0"/><path d="M9 15h4v3h3v2H6v-2h3z" fill="#aaa"/></svg></div>
  <div class="slot"><svg width="24" height="24" viewBox="0 0 24 24"><defs><linearGradient id="mp" x2="0" y2="1"><stop stop-color="#ff8a3c"/><stop offset="1" stop-color="#a06cd5"/></linearGradient></defs><circle cx="12" cy="12" r="10.500" fill="#2c2530" stroke="url(#mp)" stroke-width="2"/><path d="M9 6.500l8 5.500-8 5.500z" fill="#fff"/></svg></div>
  <div class="slot"><svg width="24" height="22" viewBox="0 0 24 22"><path d="M0 1h9l2 3h13v18H0z" fill="#f7b916"/><path d="M0 6h24v16H0z" fill="#ffd95c"/><path d="M5 14h14v8h-4v-4H9v4H5z" fill="#1b84d8"/></svg></div>
  <div class="ms-auto d-flex align-items-center">
    <svg width="12" height="8" viewBox="0 0 12 8" fill="none" stroke="#fff" stroke-width="1.200"><path d="M1 7l5-5.500L11 7"/></svg>
    <span class="ms-3">ENG</span>
    <svg class="ms-3" width="17" height="17" viewBox="0 0 17 17" fill="none" stroke="#fff" stroke-width="1.200"><path d="M10 3H1v10h13V9M5 16h7M8 13v3M12 1h4v4h-4zM14 5v3"/></svg>
    <svg class="ms-2" width="16" height="16" viewBox="0 0 16 16" fill="none" stroke="#fff" stroke-width="1.200"><path d="M1 6h3l4-4v12l-4-4H1zM10 6q2 2 0 4M12 4q3 4 0 8"/></svg>
    <svg class="ms-2" width="17" height="14" viewBox="0 0 17 14" fill="none" stroke="#fff" stroke-width="1.400"><rect x="1" y="2" width="13" height="10" rx="2"/><path d="M3.500 4h5v6h-5z" fill="#fff"/><path d="M16 5v4"/></svg>
    <div class="text-end ms-3">9:48 AM<br>3/4/2022</div>
  </div>
</footer>

<script>
const dates = ['30','31'];
for (let d = 1; d <= 28; d++) dates.push(String(d).padStart(2, '0'));
dates.push('01','02','03','04','05');
const absent = [15,16,17,18,19,22,23,24,25,26];
const letters = 'SMTWTFS';
const alarm = '<svg width="10" height="11"><use href="#alarm"/></svg>';
let marks = '', nums = '', names = '';
dates.forEach((d, i) => {
  let mark = '';
  if (absent.includes(i) || i === 29 || i === 32) mark = alarm;
  if (i === 30 || i === 31) mark = '<span class="t-mark">T</span><div class="hours-bar"></div>';
  if (i === 33) mark = '<div class="porting-bar"></div>';
  marks += `<td>${mark}</td>`;
  let cls = i < 2 ? 'dim' : i === 28 ? 'now first-now' : i === 29 ? 'sel' : i > 29 ? 'now' : absent.includes(i) ? 'absent' : '';
  nums += `<td class="${cls}">${d}</td>`;
  const nameCls = i < 2 || i > 29 ? 'dim' : absent.includes(i) || i === 29 ? 'absent' : '';
  names += `<th class="${nameCls}">${letters[i % 7]}</th>`;
});
document.getElementById('calBody').innerHTML =
  `<tr class="marks">${marks}</tr><tr class="dates">${nums}</tr><tr class="names">${names}</tr>
   <tr class="weeks"><td colspan="7"><span class="week-label">Week Avg.</span><span style="margin-left:86px">NA</span></td><td colspan="7">NA</td><td colspan="7"></td><td colspan="7" class="zero">00h 00m</td><td colspan="7" class="zero last-week">05h 00m</td></tr>`;

const apply = 'Click here to Apply TopUp';
const days = [['Sun, 27 Feb',apply],['Mon, 28 Feb',apply],['',''],['',apply],['Thu, 03 Mar',apply],['Fri, 04 Mar','Data porting in progress'],['Sat, 05 Mar','']];
const times = `<b>-- h -- m</b><div class="door-line d-flex align-items-center justify-content-center"><svg width="13" height="14"><use href="#door-in"/></svg>-- : --<span class="vbar mx-2" style="background:currentColor"></span><svg width="13" height="14"><use href="#door-out"/></svg>-- : --</div>`;
document.getElementById('dayGrid').innerHTML = days.map(([name, text], i) => `
  <article class="day-card ${i === 1 ? 'chosen' : ''}">
    <header ${i === 4 ? 'style="color:#f7b3b5"' : ''}>${name}</header>
    <div class="day-time">${name ? times : ''}</div>
    <div class="day-topup">${name ? text : ''}</div>
    ${text === apply ? '<button class="plain-btn plus-btn" aria-label="Add top up"><svg width="12" height="12"><use href="#plus"/></svg></button>' : ''}
  </article>`).join('');
</script>
</body>
</html>
